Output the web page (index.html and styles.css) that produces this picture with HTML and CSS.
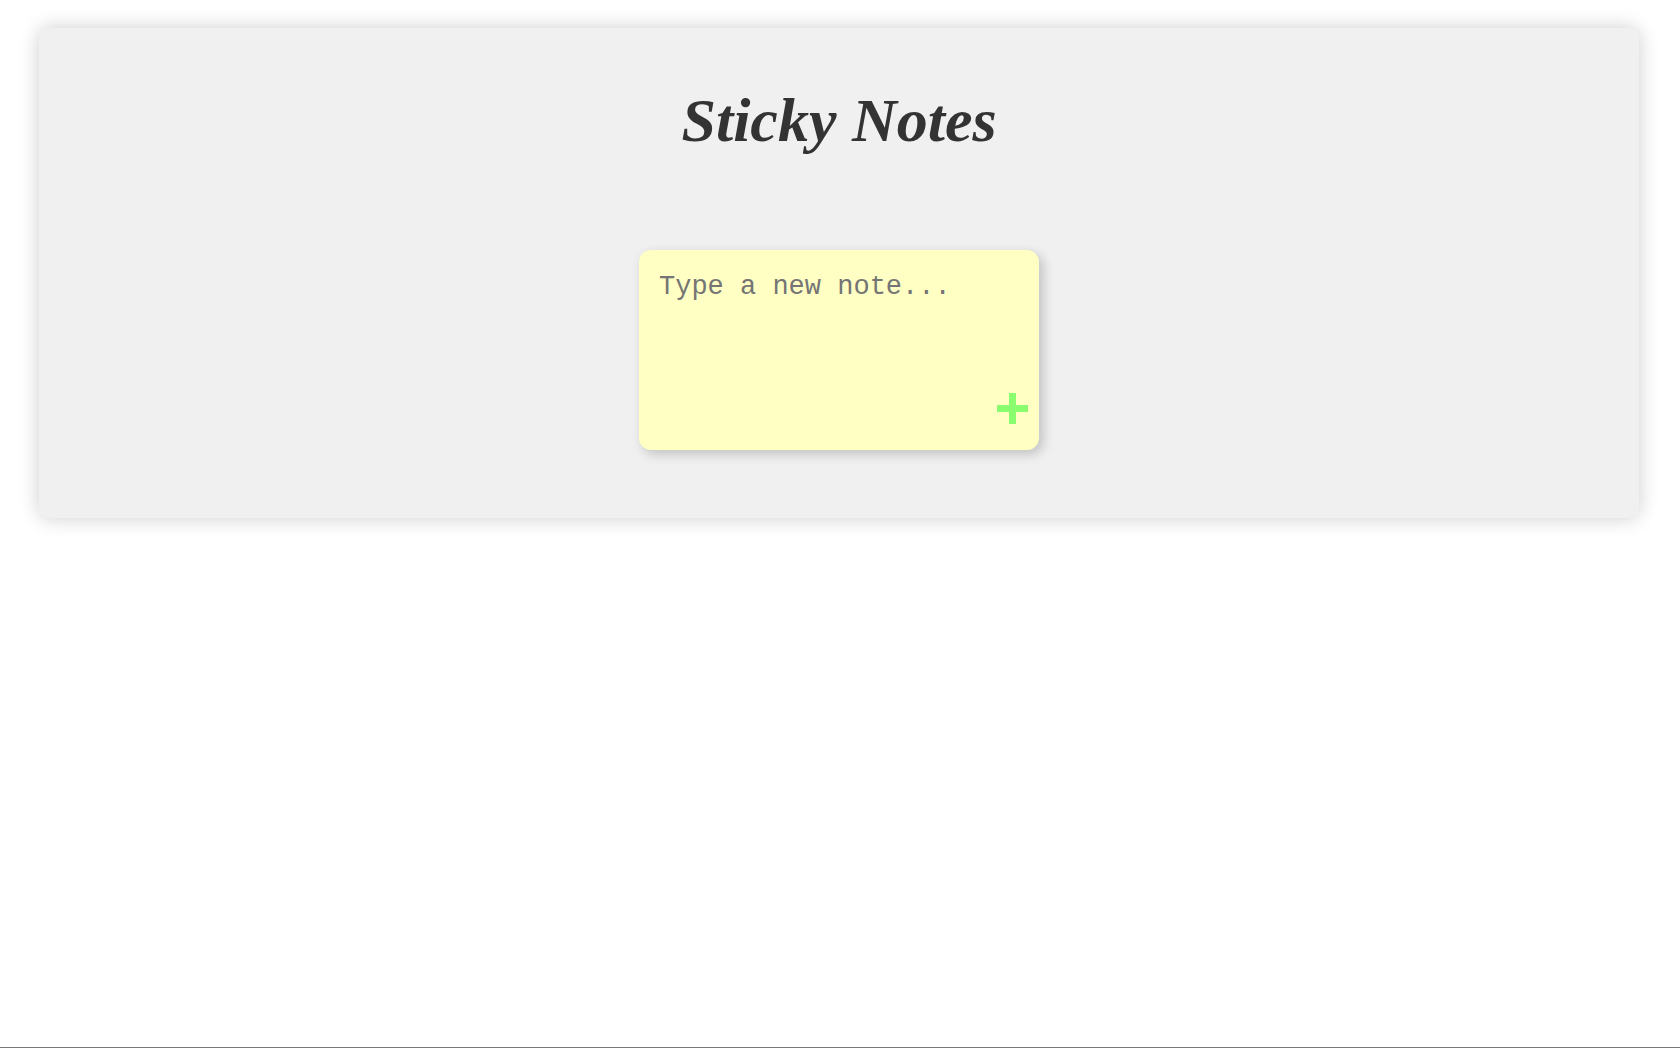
FILE: index.html
```html
<!DOCTYPE html>
<html lang="en">
<head>
<meta charset="utf-8">
<title>Sticky Notes</title>
<link rel="stylesheet" href="styles.css">
</head>
<body>
<main class="board">
  <h1 class="title">Sticky Notes</h1>
  <form class="note">
    <textarea class="note-text" aria-label="New note" placeholder="Type a new note..."></textarea>
    <button class="note-add" type="button" aria-label="Add note">
      <svg class="plus" viewBox="0 0 31 31" aria-hidden="true"><path d="M12 0h7v12h12v7H19v12h-7V19H0v-7h12z"/></svg>
    </button>
  </form>
</main>
</body>
</html>
```

FILE: styles.css
```css
* { box-sizing: border-box; }
body {
  margin: 0;
  min-height: 100vh;
  padding: 28px 41px 28px 39px;
  background: #fff;
  border-bottom: 1px solid #777;
}
.board {
  display: flex;
  flex-direction: column;
  align-items: center;
  gap: 78px;
  padding: 40px 20px 68px;
  background: #f0f0f0;
  border-radius: 10px;
  box-shadow: 0 0 20px rgba(0, 0, 0, 0.2);
}
.title {
  margin: 0;
  font: italic 700 62px/104px "Apple Chancery", "Monotype Corsiva", "Liberation Serif", serif;
  color: #333;
}
.note {
  position: relative;
  width: 400px;
  max-width: 100%;
}
.note-text {
  display: block;
  width: 100%;
  height: 200px;
  padding: 20px;
  border: 0;
  border-radius: 12px;
  outline: 0;
  resize: none;
  background: #ffffc3;
  box-shadow: 4px 4px 12px rgba(0, 0, 0, 0.2);
  font: 400 27px/34px "Liberation Mono", monospace;
  color: #333;
}
.note-text::placeholder { color: #757575; }
.note-add {
  position: absolute;
  right: 11px;
  bottom: 26px;
  padding: 0;
  border: 0;
  background: none;
  cursor: pointer;
}
.plus { display: block; width: 31px; height: 31px; fill: #89fd6d; }
```
